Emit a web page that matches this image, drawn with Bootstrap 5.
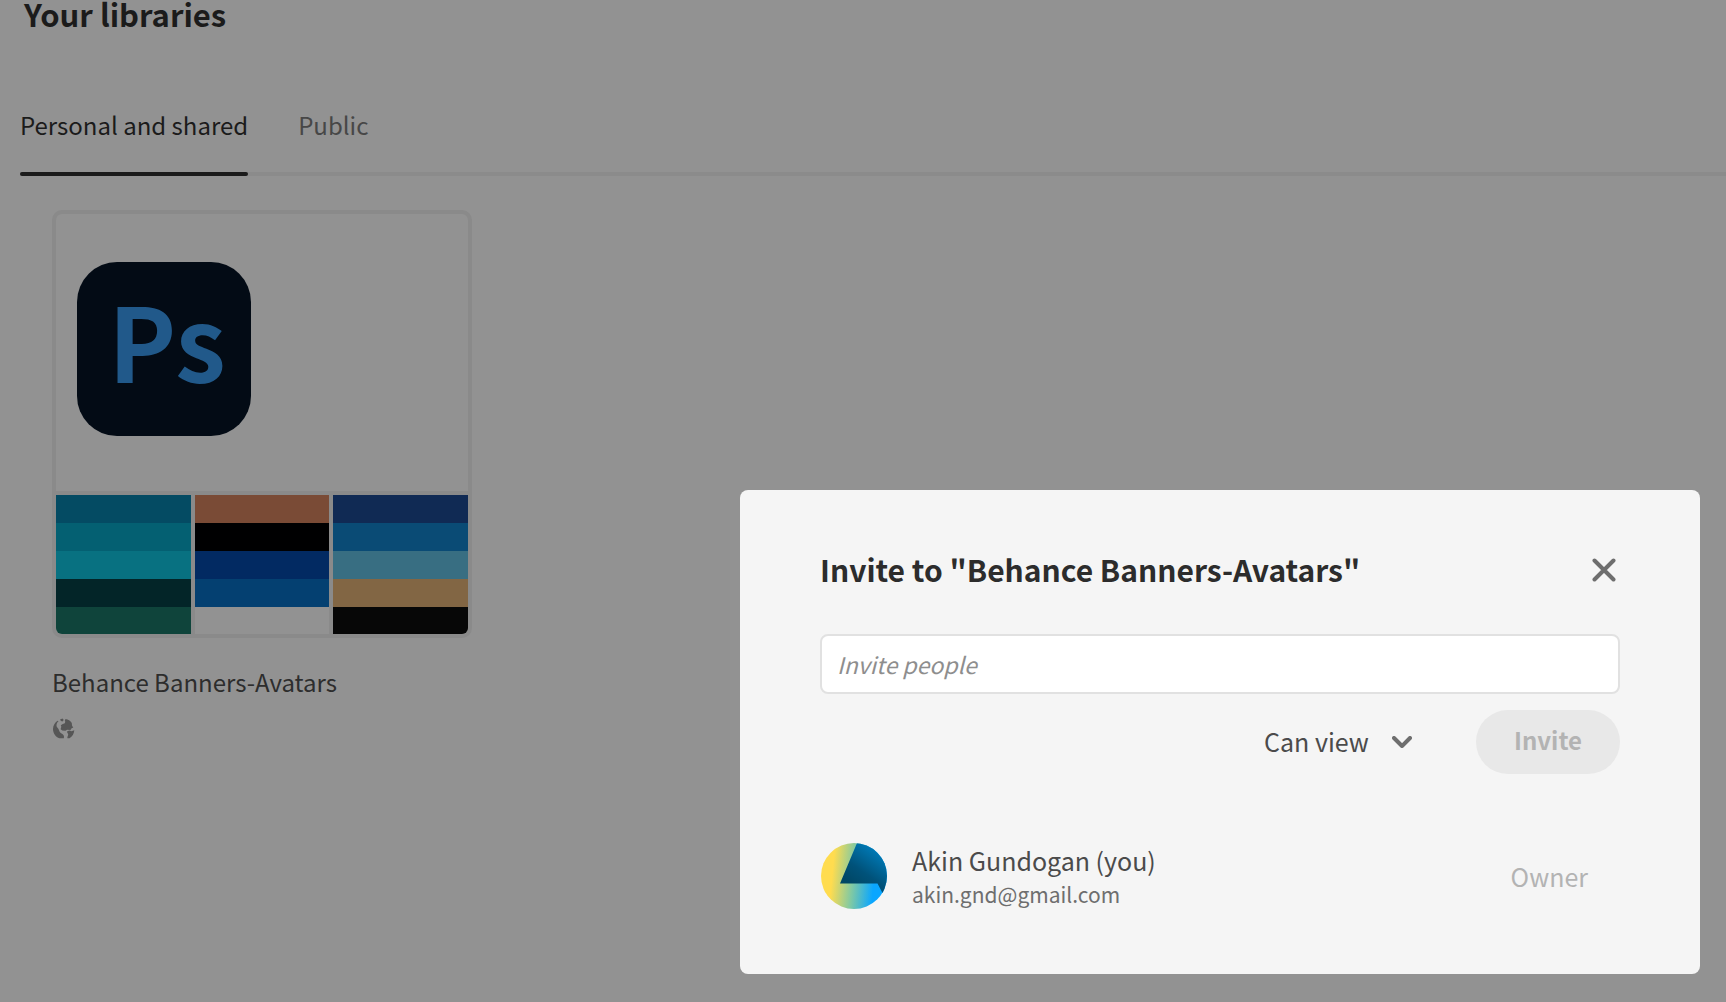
<!DOCTYPE html>
<html lang="en">
<head>
<meta charset="utf-8">
<meta name="viewport" content="width=device-width, initial-scale=1">
<title>Your libraries</title>
<link rel="stylesheet" href="https://cdn.jsdelivr.net/npm/bootstrap@5.3.0/dist/css/bootstrap.min.css">
<style>
  body { background: #929292; color: #1b1b1b; font-family: "Noto Sans CJK SC", "Noto Sans", sans-serif; font-size: 24px; line-height: 36px; }
  .page-title { font-size: 31px; line-height: 28px; font-weight: 700; margin: 0 0 79px; padding-left: 24px; }
  .lib-tabs { margin-left: 20px; gap: 50px; box-shadow: inset 0 -4px #8b8b8b; }
  .lib-tabs .nav-link { padding: 0 0 33px; color: #474747; position: relative; }
  .lib-tabs .nav-link.active { color: #1b1b1b; }
  .lib-tabs .nav-link.active::after { content: ""; position: absolute; left: 0; right: 0; bottom: 0; height: 4px; border-radius: 2px; background: #1b1b1b; }
  .library { width: 420px; margin: 34px 0 0 52px; }
  .cover { background: #8a8a8a; border: 4px solid #8a8a8a; border-radius: 10px; }
  .cover-main { height: 277px; padding: 48px 21px 0; background: #929292; border-radius: 6px 6px 0 0; }
  .app-icon { width: 174px; height: 174px; padding: 0 0 20px 6px; border-radius: 40px; background: #030b15; color: #21598a; font-size: 102px; line-height: 1; font-weight: 700; }
  .palettes { gap: 4px; margin-top: 4px; border-radius: 0 0 6px 6px; overflow: hidden; }
  .swatch { height: 28px; }
  .palette { background: #929292; height: 139px; overflow: hidden; }
  .lib-name { margin: 26px 0 18px; color: #2d2d2d; font-size: 24px; line-height: 36px; font-weight: 400; }
  .globe { display: block; margin-left: 1px; }
  .dialog-layer { padding: 28px 26px; pointer-events: none; }
  .invite-dialog { width: 960px; max-width: 100%; padding: 57px 80px 64px; background: #f5f5f5; border-radius: 8px; color: #4b4b4b; pointer-events: auto; }
  .dialog-title { font-size: 30px; line-height: 44px; font-weight: 700; color: #2c2c2c; margin: 0; }
  .close-btn { padding: 2px 4px 0; border: 0; background: none; line-height: 0; }
  .people-input { height: 60px; margin-top: 43px; padding: 0 15px; border: 2px solid #e1e1e1; border-radius: 8px; font-size: 23px; background: #fff; }
  .people-input::placeholder { color: #8e8e8e; font-style: italic; opacity: 1; }
  .invite-row { margin-top: 16px; gap: 64px; }
  .role-select { appearance: none; border: 0; background: none; color: #4b4b4b; font-size: 25px; padding: 0 36px 2px 0; height: 64px; width: 148px; }
  .role-chevron { position: absolute; right: 0; top: 26px; pointer-events: none; }
  .invite-btn { width: 144px; height: 64px; padding: 0 0 4px; border: 0; border-radius: 32px; background: #e8e8e8; color: #b3b3b3; font-size: 24px; font-weight: 700; }
  .invite-btn:disabled { background: #e8e8e8; color: #b3b3b3; opacity: 1; }
  .member { margin-top: 68px; gap: 24px; font-size: 25px; }
  .member-mail { font-size: 21px; line-height: 32px; color: #6e6e6e; }
  .member-role { color: #b3b3b3; padding-right: 32px; }
</style>
<script src="https://cdn.jsdelivr.net/npm/bootstrap@5.3.0/dist/js/bootstrap.bundle.min.js"></script>
</head>
<body>
<main>
  <h1 class="page-title">Your libraries</h1>
  <nav class="nav lib-tabs" aria-label="Libraries">
    <a class="nav-link active" aria-current="page" href="#personal">Personal and shared</a>
    <a class="nav-link" href="#public">Public</a>
  </nav>
  <article class="library">
    <div class="cover">
      <div class="cover-main">
        <div class="app-icon d-flex align-items-center justify-content-center">Ps</div>
      </div>
      <div class="palettes d-flex">
        <div class="palette flex-fill">
          <div class="swatch" style="background:#044b63"></div>
          <div class="swatch" style="background:#046072"></div>
          <div class="swatch" style="background:#087181"></div>
          <div class="swatch" style="background:#032528"></div>
          <div class="swatch" style="background:#0f443b"></div>
        </div>
        <div class="palette flex-fill">
          <div class="swatch" style="background:#7a4b36"></div>
          <div class="swatch" style="background:#000001"></div>
          <div class="swatch" style="background:#022a62"></div>
          <div class="swatch" style="background:#044071"></div>
        </div>
        <div class="palette flex-fill">
          <div class="swatch" style="background:#102a54"></div>
          <div class="swatch" style="background:#0a4b75"></div>
          <div class="swatch" style="background:#386e82"></div>
          <div class="swatch" style="background:#826644"></div>
          <div class="swatch" style="background:#070707"></div>
        </div>
      </div>
    </div>
    <h2 class="lib-name">Behance Banners-Avatars</h2>
    <svg class="globe" width="22" height="21" viewBox="0 0 22 21" role="img" aria-label="Public library" fill="#565656">
      <path d="M4.500 2.800C2 4.500 0 7.500 0 11c0 4.300 2.700 8 6.500 9.300h4.300c.4-1.300.2-2.600-.6-3.500-1-1.300-2.300-1.500-3.200-2.600C6 13 6 11.400 5 10.300 4 9.300 3.200 8.500 3.600 6.500c.2-1.300.8-2.500 2-3.200z"/>
      <path d="M7 1.500 9.500.6l1.200 1.500L9.500 3.500 8 3z"/>
      <path d="M12.500 1c2.600.2 5 1.700 6.300 4l.2 2.500 1.300 2.200-1.500.4-1.300 1.800-3.500-.1-1.500 1-3.200-.3-1.700-1.300.7-2.500-.5-1.500 2-1.200 2-.7.500-1.500-.5-1z"/>
      <path d="M14.200 13.200l2.300-.8 2 .8 2.800-1c-.3 3.400-2 6.300-4.800 8.100h-2c-.6-1.200.7-2.500.7-3.800 0-1.200-1.500-1.800-1-3.300z"/>
    </svg>
  </article>
</main>

<div class="dialog-layer position-fixed top-0 start-0 w-100 h-100 d-flex align-items-end justify-content-end">
  <section class="invite-dialog" role="dialog" aria-labelledby="inviteTitle">
    <div class="d-flex align-items-center justify-content-between">
      <h2 class="dialog-title" id="inviteTitle">Invite to "Behance Banners-Avatars"</h2>
      <button type="button" class="close-btn" aria-label="Close">
        <svg width="24" height="24" viewBox="0 0 24 24" fill="none" stroke="#6e6e6e" stroke-width="4" stroke-linecap="round"><path d="M2.500 2.500l19 19M21.500 2.500l-19 19"/></svg>
      </button>
    </div>
    <input type="text" class="form-control people-input" placeholder="Invite people" aria-label="Invite people">
    <div class="invite-row d-flex justify-content-end align-items-center">
      <div class="position-relative">
        <select class="role-select d-block" aria-label="Permission">
          <option>Can view</option>
          <option>Can edit</option>
        </select>
        <svg class="role-chevron" width="20" height="12" viewBox="0 0 20 12" fill="none" stroke="#6e6e6e" stroke-width="4" stroke-linecap="round" stroke-linejoin="round"><path d="M2 2l8 8 8-8"/></svg>
      </div>
      <button type="button" class="btn invite-btn" disabled>Invite</button>
    </div>
    <div class="member d-flex align-items-center">
      <svg width="68" height="66" viewBox="0 0 68 66" aria-hidden="true">
        <defs>
          <linearGradient id="avatarBase" gradientUnits="userSpaceOnUse" x1="12" y1="33" x2="54" y2="37"><stop offset="0" stop-color="#ffdc4f"/><stop offset=".5" stop-color="#7fc9a4"/><stop offset="1" stop-color="#0aa6ff"/></linearGradient>
          <linearGradient id="avatarWedge" gradientUnits="userSpaceOnUse" x1="30" y1="40" x2="54" y2="6"><stop offset="0" stop-color="#004765"/><stop offset=".4" stop-color="#00527a"/><stop offset="1" stop-color="#0079b5"/></linearGradient>
          <clipPath id="avatarClip"><circle cx="34" cy="33" r="33"/></clipPath>
        </defs>
        <g clip-path="url(#avatarClip)">
          <path fill="url(#avatarBase)" d="M0 0h68v66H0z"/>
          <path fill="url(#avatarWedge)" d="M37 0 20 40.500h37.500l5 9.500H68V0z"/>
        </g>
      </svg>
      <div class="flex-grow-1">
        <div>Akin Gundogan (you)</div>
        <div class="member-mail">akin.gnd@gmail.com</div>
      </div>
      <div class="member-role">Owner</div>
    </div>
  </section>
</div>
</body>
</html>
